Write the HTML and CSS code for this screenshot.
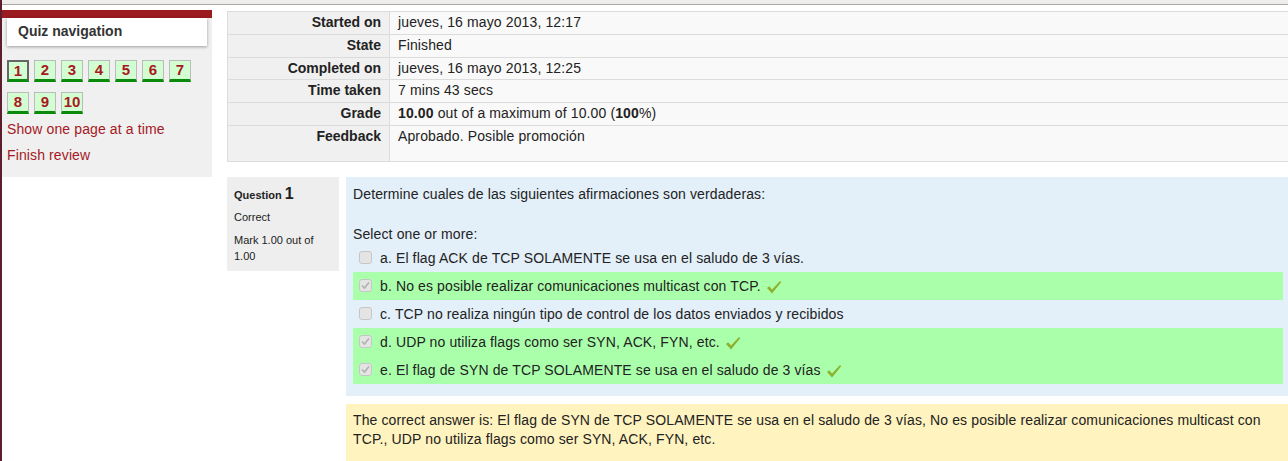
FILE: index.html
```html
<!DOCTYPE html>
<html lang="es">
<head>
<meta charset="utf-8">
<title>Quiz review</title>
<link rel="stylesheet" href="styles.css">
</head>
<body>
<div class="topbar"></div>
<div class="page">
  <aside class="nav-block">
    <div class="nav-title">Quiz navigation</div>
    <div class="nav-content">
      <div class="qn-buttons">
        <span class="qn current">1</span>
        <span class="qn">2</span>
        <span class="qn">3</span>
        <span class="qn">4</span>
        <span class="qn">5</span>
        <span class="qn">6</span>
        <span class="qn">7</span>
        <span class="qn">8</span>
        <span class="qn">9</span>
        <span class="qn">10</span>
      </div>
      <a class="nav-link" href="#">Show one page at a time</a>
      <a class="nav-link second" href="#">Finish review</a>
    </div>
  </aside>
  <main class="main">
    <table class="summary">
      <tr><th>Started on</th><td>jueves, 16 mayo 2013, 12:17</td></tr>
      <tr><th>State</th><td>Finished</td></tr>
      <tr><th>Completed on</th><td>jueves, 16 mayo 2013, 12:25</td></tr>
      <tr><th>Time taken</th><td>7 mins 43 secs</td></tr>
      <tr><th>Grade</th><td><b>10.00</b> out of a maximum of 10.00 (<b>100</b>%)</td></tr>
      <tr class="last"><th>Feedback</th><td>Aprobado. Posible promoción</td></tr>
    </table>

    <div class="que">
      <div class="info">
        <div class="qno">Question <span class="num">1</span></div>
        <div class="state">Correct</div>
        <div class="grade">Mark 1.00 out of 1.00</div>
      </div>
      <div class="content">
        <div class="formulation">
          <p class="qtext">Determine cuales de las siguientes afirmaciones son verdaderas:</p>
          <p class="prompt">Select one or more:</p>
          <div class="answers">
            <div class="opt"><span class="cb"></span><span>a. El flag ACK de TCP SOLAMENTE se usa en el saludo de 3 vías.</span></div>
            <div class="opt correct"><span class="cb checked"><svg viewBox="0 0 13 13" width="13" height="13"><path d="M3 6.5 L5.5 9 L10 3.5" fill="none" stroke="#b0b0b0" stroke-width="1.6"/></svg></span><span>b. No es posible realizar comunicaciones multicast con TCP.</span><svg class="tick" viewBox="0 0 16 14" width="16" height="14"><path d="M1 8 L3.2 6.3 L6 9.5 L14 1 L15.2 2.2 L6 13.5 Z" fill="#8db230"/></svg></div>
            <div class="opt"><span class="cb"></span><span>c. TCP no realiza ningún tipo de control de los datos enviados y recibidos</span></div>
            <div class="opt correct"><span class="cb checked"><svg viewBox="0 0 13 13" width="13" height="13"><path d="M3 6.5 L5.5 9 L10 3.5" fill="none" stroke="#b0b0b0" stroke-width="1.6"/></svg></span><span>d. UDP no utiliza flags como ser SYN, ACK, FYN, etc.</span><svg class="tick" viewBox="0 0 16 14" width="16" height="14"><path d="M1 8 L3.2 6.3 L6 9.5 L14 1 L15.2 2.2 L6 13.5 Z" fill="#8db230"/></svg></div>
            <div class="opt correct"><span class="cb checked"><svg viewBox="0 0 13 13" width="13" height="13"><path d="M3 6.5 L5.5 9 L10 3.5" fill="none" stroke="#b0b0b0" stroke-width="1.6"/></svg></span><span>e. El flag de SYN de TCP SOLAMENTE se usa en el saludo de 3 vías</span><svg class="tick" viewBox="0 0 16 14" width="16" height="14"><path d="M1 8 L3.2 6.3 L6 9.5 L14 1 L15.2 2.2 L6 13.5 Z" fill="#8db230"/></svg></div>
          </div>
        </div>
        <div class="outcome">The correct answer is: El flag de SYN de TCP SOLAMENTE se usa en el saludo de 3 vías, No es posible realizar comunicaciones multicast con TCP., UDP no utiliza flags como ser SYN, ACK, FYN, etc.</div>
      </div>
    </div>
  </main>
</div>
</body>
</html>
```

FILE: styles.css
```css
html, body {
  margin: 0;
  padding: 0;
}
body {
  font-family: "Liberation Sans", Arial, sans-serif;
  font-size: 14px;
  letter-spacing: 0.12px;
  color: #222;
  background: #fff;
  border-left: 2px solid #5a1e2c;
  min-height: 100vh;
  box-sizing: border-box;
  overflow: hidden;
}
.topbar {
  height: 4px;
  background: #efedeb;
  border-bottom: 1px solid #aaa;
}
.page {
  display: flex;
  align-items: flex-start;
}
.nav-block {
  width: 210px;
  flex: none;
  margin-top: 5px;
  background: #f0f0f0;
  border-top: 8px solid #9b1b20;
}
.nav-title {
  margin: 0 5px;
  height: 28px;
  line-height: 26px;
  padding-left: 11px;
  background: #fff;
  font-weight: bold;
  color: #333;
  letter-spacing: 0;
  box-shadow: 0 1px 3px rgba(0,0,0,0.35);
}
.nav-content {
  padding: 14px 5px 13px 5px;
}
.qn-buttons {
  display: flex;
  flex-wrap: wrap;
  column-gap: 5px;
  row-gap: 10px;
  width: 190px;
}
.qn {
  box-sizing: border-box;
  width: 22px;
  height: 22px;
  background: #d2ffd2;
  border: 1px solid #bbb;
  border-bottom: 3px solid #0a8a0a;
  color: #a8191f;
  font-weight: bold;
  font-size: 15px;
  letter-spacing: 0;
  line-height: 18px;
  text-align: center;
}
.qn.current {
  border: 2px solid #666;
  border-bottom: 3px solid #0a8a0a;
  line-height: 17px;
}
.nav-link {
  display: block;
  color: #a4191f;
  text-decoration: none;
  line-height: 18px;
  margin-top: 6px;
}
.nav-link.second {
  margin-top: 8px;
}
.main {
  flex: 1;
  min-width: 0;
  margin-left: 15px;
  margin-top: 6px;
}
.summary {
  width: 100%;
  border-collapse: collapse;
  background: #f9f9f9;
}
.summary th, .summary td {
  border: 1px solid #dcdcdc;
  padding: 3px 8px;
  line-height: 15.8px;
  vertical-align: top;
}
.summary td {
  border-right: none;
  font-weight: normal;
}
.summary th {
  width: 145px;
  text-align: right;
  background: #f0f0f0;
  font-weight: bold;
  letter-spacing: 0;
}
.summary tr.last th, .summary tr.last td {
  padding-bottom: 16px;
}
.que {
  display: flex;
  align-items: flex-start;
  margin-top: 15px;
}
.info {
  width: 98px;
  flex: none;
  background: #eee;
  padding: 7px 7px 7px 7px;
  font-size: 11px;
  letter-spacing: 0;
  line-height: 16px;
  color: #222;
}
.qno {
  font-weight: bold;
  line-height: 20px;
  height: 20px;
}
.qno .num {
  font-size: 16px;
}
.state {
  margin-top: 5px;
}
.grade {
  margin-top: 7px;
  width: 90px;
}
.content {
  flex: 1;
  min-width: 0;
  margin-left: 7px;
}
.formulation {
  background: #e3eff9;
  padding: 7px 5px 12px 7px;
  line-height: 20px;
}
.formulation p {
  margin: 0;
}
.qtext {
  margin-bottom: 20px !important;
}
.answers {
  display: flex;
  flex-direction: column;
}
.opt {
  display: flex;
  align-items: center;
  height: 28px;
  padding-left: 6px;
}
.opt.correct {
  background: #aaffaa;
}
.cb {
  box-sizing: border-box;
  width: 13px;
  height: 13px;
  border: 1px solid #c6c6c6;
  border-radius: 3px;
  background: #e4e4e4;
  margin-right: 8px;
  flex: none;
  display: flex;
  position: relative;
}
.cb svg {
  position: absolute;
  left: -1px;
  top: -1px;
}
.tick {
  margin-left: 5px;
  margin-top: 3px;
}
.outcome {
  margin-top: 8px;
  background: #fff3bf;
  padding: 7px 7px 20px 7px;
  line-height: 19px;
}
```
